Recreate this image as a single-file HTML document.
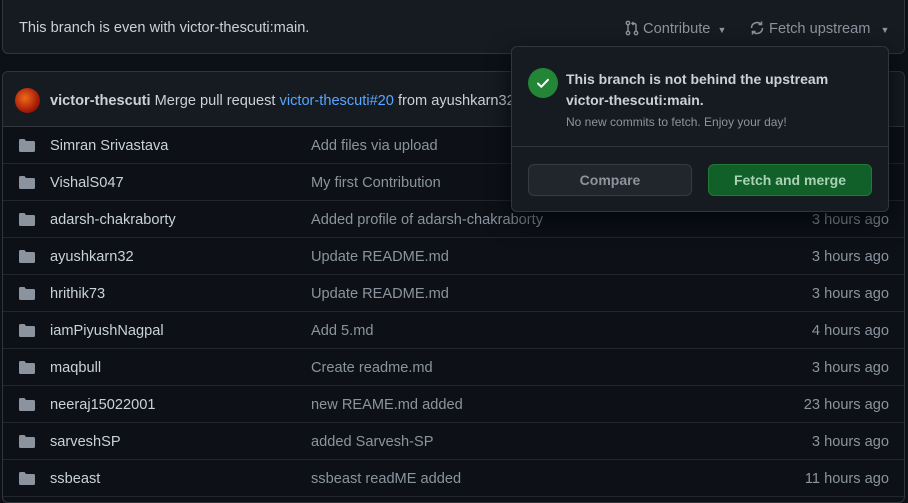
<!DOCTYPE html>
<html><head><style>
body{margin:0;background:#0d1117;width:908px;height:486px;overflow:hidden;font-family:"Liberation Sans",sans-serif;font-size:14.6px;color:#c9d1d9;position:relative}
.top{position:absolute;left:2px;top:0;width:901px;height:53px;border:1px solid #30363d;border-top:none;border-radius:0 0 6px 6px;background:#161b22}
.top .t{position:absolute;left:16px;top:20px}
.btn{position:absolute;top:20px;color:#8b949e}
.box{position:absolute;left:2px;top:71px;width:901px;height:430px;border:1px solid #30363d;border-radius:6px;background:#0d1117}
.hdr{height:54px;background:#161b22;border-bottom:1px solid #30363d;position:relative;border-radius:6px 6px 0 0}
.av{position:absolute;left:12px;top:16px;width:25px;height:25px;border-radius:50%;background:radial-gradient(circle at 40% 40%,#f06a1a,#a81e08 60%,#4a0a04)}
.hdr .m{position:absolute;left:47px;top:21px}
.row{height:36px;border-bottom:1px solid #21262d;position:relative}
.row .f{position:absolute;left:16px;top:12px;width:16px;height:13px}
.row .n{position:absolute;left:47px;top:11px}
.row .c{position:absolute;left:308px;top:11px;color:#8b949e}
.row .d{position:absolute;right:15px;top:11px;color:#8b949e}
.pop{position:absolute;left:511px;top:46px;width:376px;height:164px;border:1px solid #30363d;border-radius:6px;background:#161b22;box-shadow:0 8px 24px rgba(1,4,9,.8)}
.pop .ck{position:absolute;left:16px;top:21px;width:30px;height:30px;border-radius:50%;background:#238636}
.pop .h{position:absolute;left:54px;top:22px;font-weight:bold;font-size:14px;line-height:21px;color:#c9d1d9}
.pop .s{position:absolute;left:54px;top:68px;font-size:12px;color:#8b949e}
.pop .sep{position:absolute;left:0;right:0;top:99px;border-top:1px solid #30363d}
.pb{position:absolute;top:117px;width:162px;height:30px;border-radius:6px;text-align:center;line-height:30px;font-weight:bold;font-size:14px}
</style></head><body>
<div class="top"><span class="t">This branch is even with victor-thescuti:main.</span>
<span class="btn" style="left:622px"><svg width="14" height="16" viewBox="0 0 14 16" style="vertical-align:-3px" fill="none" stroke="#8b949e" stroke-width="1.4"><circle cx="3" cy="3" r="1.7"/><circle cx="3" cy="13" r="1.7"/><circle cx="11" cy="13" r="1.7"/><path d="M3 5v6M11 11V5.5Q11 3.5 9 3.5H7M8.5 2L7 3.5 8.5 5"/></svg> Contribute <span style="font-size:9px;margin-left:3px">▼</span></span>
<span class="btn" style="left:746px"><svg width="16" height="16" viewBox="0 0 16 16" style="vertical-align:-3px" fill="none" stroke="#8b949e" stroke-width="1.5"><path d="M2.5 8a5.5 5.5 0 0 1 9.5-3.7M13.5 8a5.5 5.5 0 0 1-9.5 3.7"/><path d="M12.5 1.5v3h-3M3.5 14.5v-3h3"/></svg> Fetch upstream <span style="font-size:9px;margin-left:6px">▼</span></span>
</div>
<div class="box">
<div class="hdr"><div class="av"></div><span class="m"><b>victor-thescuti</b> Merge pull request <span style="color:#58a6ff">victor-thescuti#20</span> from ayushkarn32</span></div>
<div class="row"><svg class="f" viewBox="0 0 16 13"><path d="M0 1.5Q0 0 1.5 0h4l1.5 2h7.5Q16 2 16 3.5v8Q16 13 14.5 13h-13Q0 13 0 11.5z" fill="#8b949e"/></svg><span class="n">Simran Srivastava</span><span class="c">Add files via upload</span><span class="d">3 hours ago</span></div>
<div class="row"><svg class="f" viewBox="0 0 16 13"><path d="M0 1.5Q0 0 1.5 0h4l1.5 2h7.5Q16 2 16 3.5v8Q16 13 14.5 13h-13Q0 13 0 11.5z" fill="#8b949e"/></svg><span class="n">VishalS047</span><span class="c">My first Contribution</span><span class="d">3 hours ago</span></div>
<div class="row"><svg class="f" viewBox="0 0 16 13"><path d="M0 1.5Q0 0 1.5 0h4l1.5 2h7.5Q16 2 16 3.5v8Q16 13 14.5 13h-13Q0 13 0 11.5z" fill="#8b949e"/></svg><span class="n">adarsh-chakraborty</span><span class="c">Added profile of adarsh-chakraborty</span><span class="d">3 hours ago</span></div>
<div class="row"><svg class="f" viewBox="0 0 16 13"><path d="M0 1.5Q0 0 1.5 0h4l1.5 2h7.5Q16 2 16 3.5v8Q16 13 14.5 13h-13Q0 13 0 11.5z" fill="#8b949e"/></svg><span class="n">ayushkarn32</span><span class="c">Update README.md</span><span class="d">3 hours ago</span></div>
<div class="row"><svg class="f" viewBox="0 0 16 13"><path d="M0 1.5Q0 0 1.5 0h4l1.5 2h7.5Q16 2 16 3.5v8Q16 13 14.5 13h-13Q0 13 0 11.5z" fill="#8b949e"/></svg><span class="n">hrithik73</span><span class="c">Update README.md</span><span class="d">3 hours ago</span></div>
<div class="row"><svg class="f" viewBox="0 0 16 13"><path d="M0 1.5Q0 0 1.5 0h4l1.5 2h7.5Q16 2 16 3.5v8Q16 13 14.5 13h-13Q0 13 0 11.5z" fill="#8b949e"/></svg><span class="n">iamPiyushNagpal</span><span class="c">Add 5.md</span><span class="d">4 hours ago</span></div>
<div class="row"><svg class="f" viewBox="0 0 16 13"><path d="M0 1.5Q0 0 1.5 0h4l1.5 2h7.5Q16 2 16 3.5v8Q16 13 14.5 13h-13Q0 13 0 11.5z" fill="#8b949e"/></svg><span class="n">maqbull</span><span class="c">Create readme.md</span><span class="d">3 hours ago</span></div>
<div class="row"><svg class="f" viewBox="0 0 16 13"><path d="M0 1.5Q0 0 1.5 0h4l1.5 2h7.5Q16 2 16 3.5v8Q16 13 14.5 13h-13Q0 13 0 11.5z" fill="#8b949e"/></svg><span class="n">neeraj15022001</span><span class="c">new REAME.md added</span><span class="d">23 hours ago</span></div>
<div class="row"><svg class="f" viewBox="0 0 16 13"><path d="M0 1.5Q0 0 1.5 0h4l1.5 2h7.5Q16 2 16 3.5v8Q16 13 14.5 13h-13Q0 13 0 11.5z" fill="#8b949e"/></svg><span class="n">sarveshSP</span><span class="c">added Sarvesh-SP</span><span class="d">3 hours ago</span></div>
<div class="row"><svg class="f" viewBox="0 0 16 13"><path d="M0 1.5Q0 0 1.5 0h4l1.5 2h7.5Q16 2 16 3.5v8Q16 13 14.5 13h-13Q0 13 0 11.5z" fill="#8b949e"/></svg><span class="n">ssbeast</span><span class="c">ssbeast readME added</span><span class="d">11 hours ago</span></div>
</div>
<div class="pop">
<div class="ck"><svg width="30" height="30" viewBox="0 0 30 30"><path d="M10 15.5l3.3 3.3 6.7-7" fill="none" stroke="#fff" stroke-width="2" stroke-linecap="round" stroke-linejoin="round"/></svg></div>
<div class="h">This branch is not behind the upstream<br>victor-thescuti:main.</div>
<div class="s">No new commits to fetch. Enjoy your day!</div>
<div class="sep"></div>
<div class="pb" style="left:16px;background:#21262d;border:1px solid #363b42;color:#8b949e;width:162px">Compare</div>
<div class="pb" style="left:196px;background:#11602a;border:1px solid #217a35;color:#a9d2b3">Fetch and merge</div>
</div>
</body></html>
